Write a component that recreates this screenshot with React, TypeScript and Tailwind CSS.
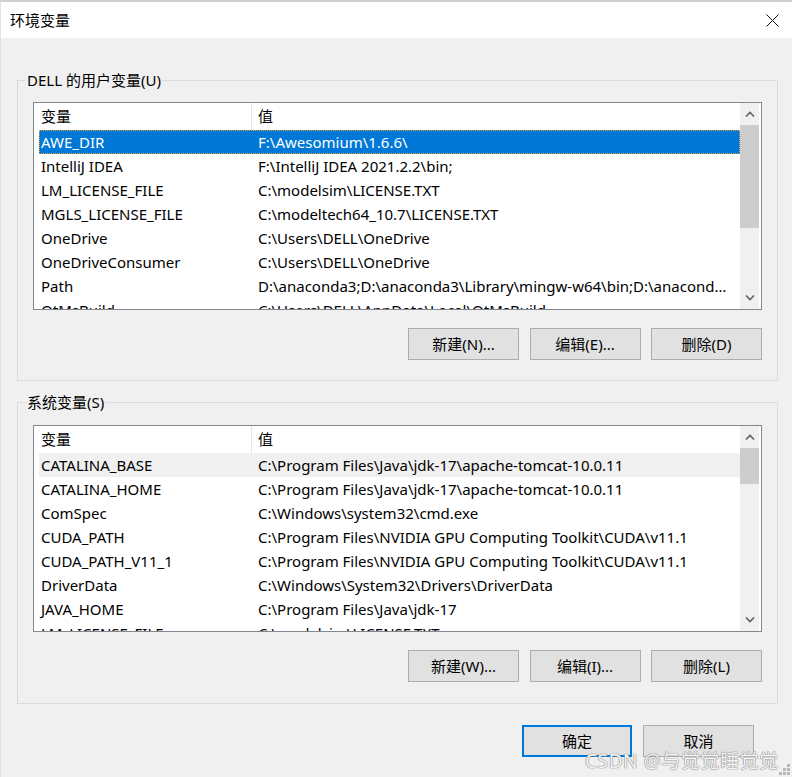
import React from 'react';

type Row = { name: string; value: string };

const userVars: Row[] = [
  { name: 'AWE_DIR', value: 'F:\\Awesomium\\1.6.6\\' },
  { name: 'IntelliJ IDEA', value: 'F:\\IntelliJ IDEA 2021.2.2\\bin;' },
  { name: 'LM_LICENSE_FILE', value: 'C:\\modelsim\\LICENSE.TXT' },
  { name: 'MGLS_LICENSE_FILE', value: 'C:\\modeltech64_10.7\\LICENSE.TXT' },
  { name: 'OneDrive', value: 'C:\\Users\\DELL\\OneDrive' },
  { name: 'OneDriveConsumer', value: 'C:\\Users\\DELL\\OneDrive' },
  { name: 'Path', value: 'D:\\anaconda3;D:\\anaconda3\\Library\\mingw-w64\\bin;D:\\anaconda3\\Library\\usr\\bin' },
  { name: 'QtMsBuild', value: 'C:\\Users\\DELL\\AppData\\Local\\QtMsBuild' },
];

const sysVars: Row[] = [
  { name: 'CATALINA_BASE', value: 'C:\\Program Files\\Java\\jdk-17\\apache-tomcat-10.0.11' },
  { name: 'CATALINA_HOME', value: 'C:\\Program Files\\Java\\jdk-17\\apache-tomcat-10.0.11' },
  { name: 'ComSpec', value: 'C:\\Windows\\system32\\cmd.exe' },
  { name: 'CUDA_PATH', value: 'C:\\Program Files\\NVIDIA GPU Computing Toolkit\\CUDA\\v11.1' },
  { name: 'CUDA_PATH_V11_1', value: 'C:\\Program Files\\NVIDIA GPU Computing Toolkit\\CUDA\\v11.1' },
  { name: 'DriverData', value: 'C:\\Windows\\System32\\Drivers\\DriverData' },
  { name: 'JAVA_HOME', value: 'C:\\Program Files\\Java\\jdk-17' },
  { name: 'LM_LICENSE_FILE', value: 'C:\\modelsim\\LICENSE.TXT' },
];

const Chevron = ({ down }: { down?: boolean }) => (
  <svg width="10" height="6" viewBox="0 0 10 6" className={down ? 'rotate-180' : ''}>
    <path d="M1 5.5 L5 1.5 L9 5.5" fill="none" stroke="#606060" strokeWidth="1.6" />
  </svg>
);

const ScrollBar = ({ thumbHeight }: { thumbHeight: string }) => (
  <div className="w-[19px] mr-[2px] bg-[#f0f0f0] flex flex-col">
    <div className="h-[22px] flex items-center justify-center shrink-0">
      <Chevron />
    </div>
    <div className="flex-1 flex flex-col">
      <div className={`${thumbHeight} bg-[#cdcdcd]`} />
    </div>
    <div className="h-[22px] flex items-center justify-center shrink-0">
      <Chevron down />
    </div>
  </div>
);

const VarList = ({
  rows,
  selected,
  hovered,
  thumbHeight,
  listHeight,
}: {
  rows: Row[];
  selected?: number;
  hovered?: number;
  thumbHeight: string;
  listHeight: string;
}) => (
  <div className={`${listHeight} w-[729px] border border-[#828790] bg-white flex overflow-hidden`}>
    <div className="flex-1 flex flex-col min-w-0">
      <div className="h-[27px] flex shrink-0 items-center">
        <div className="w-[218px] h-full pl-[7px] border-r border-[#e5e5e5] flex items-center">变量</div>
        <div className="pl-[6px]">值</div>
      </div>
      {rows.map((r, i) => (
        <div
          key={r.name + i}
          className={`h-[24px] ml-[5px] pl-[2px] flex items-center shrink-0 ${
            i === selected
              ? 'bg-[#0078d7] text-white outline-1 outline-dotted outline-[#f0a040] -outline-offset-1'
              : i === hovered
              ? 'bg-[#f0f0f0]'
              : ''
          }`}
        >
          <div className="w-[217px] shrink-0 whitespace-nowrap">{r.name}</div>
          <div className="flex-1 min-w-0 pr-[9px] whitespace-nowrap overflow-hidden text-ellipsis">{r.value}</div>
        </div>
      ))}
    </div>
    <ScrollBar thumbHeight={thumbHeight} />
  </div>
);

const WinButton = ({ label, primary }: { label: string; primary?: boolean }) => (
  <button
    className={`h-[32px] bg-[#e1e1e1] flex items-center justify-center ${
      primary ? 'w-[110px] border-2 border-[#0078d7]' : 'w-[111px] border border-[#adadad]'
    }`}
  >
    {label}
  </button>
);

const GroupBox = ({
  title,
  rows,
  buttons,
  selected,
  hovered,
  thumbHeight,
  boxClass,
  listHeight,
}: {
  title: string;
  rows: Row[];
  buttons: string[];
  selected?: number;
  hovered?: number;
  thumbHeight: string;
  boxClass: string;
  listHeight: string;
}) => (
  <div className={`relative w-[761px] border border-[#dcdcdc] px-[15px] ${boxClass}`}>
    <div className="absolute left-[8px] top-[-11px] bg-[#f0f0f0] px-[1px] leading-[20px]">{title}</div>
    <VarList rows={rows} selected={selected} hovered={hovered} thumbHeight={thumbHeight} listHeight={listHeight} />
    <div className="mt-[18px] flex justify-end gap-[10.5px]">
      {buttons.map((b) => (
        <WinButton key={b} label={b} />
      ))}
    </div>
  </div>
);

export default function App() {
  return (
    <div
      className="relative w-[792px] h-[777px] bg-[#f0f0f0] border-t-2 border-t-[#cfcfcf] border-l border-l-[#e2e2e2] overflow-hidden text-[15px] text-black"
      style={{ fontFamily: '"Noto Sans", "Noto Sans CJK SC", sans-serif' }}
    >
      <div className="h-[36px] bg-white flex items-center justify-between pl-[9px] pr-[13px]">
        <span className="text-[15px]">环境变量</span>
        <svg width="13" height="13" viewBox="0 0 13 13">
          <path d="M0.5 0.5 L12.5 12.5 M12.5 0.5 L0.5 12.5" stroke="#111" strokeWidth="1" />
        </svg>
      </div>

      <div className="pl-[16px] pt-[42px] flex flex-col gap-[21px]">
        <GroupBox
          title="DELL 的用户变量(U)"
          rows={userVars}
          buttons={['新建(N)...', '编辑(E)...', '删除(D)']}
          selected={0}
          thumbHeight="h-[103px]"
          boxClass="h-[301px] pt-[21px]"
          listHeight="h-[208px]"
        />
        <GroupBox
          title="系统变量(S)"
          rows={sysVars}
          buttons={['新建(W)...', '编辑(I)...', '删除(L)']}
          hovered={0}
          thumbHeight="h-[36px]"
          boxClass="h-[302px] pt-[22px]"
          listHeight="h-[207px]"
        />
      </div>

      <div className="mt-[21px] pr-[38px] flex justify-end gap-[11px]">
        <WinButton label="确定" primary />
        <WinButton label="取消" />
      </div>

      <div className="absolute left-[584px] top-[745px] text-[19px] tracking-[0.6px] text-[#f4f4f4] [text-shadow:0_0_1px_#8a8a8a,0_0_1px_#8a8a8a,0_0_1px_#8a8a8a]">
        CSDN @与觉觉睡觉觉
      </div>

      <div className="absolute right-[2px] bottom-[2px] grid grid-cols-3 gap-[1px] w-[11px] h-[11px]">
        {[0, 0, 1, 0, 1, 1, 1, 1, 1].map((v, i) => (
          <div key={i} className={`w-[3px] h-[3px] ${v ? 'bg-[#b8b8b8]' : ''}`} />
        ))}
      </div>
    </div>
  );
}
